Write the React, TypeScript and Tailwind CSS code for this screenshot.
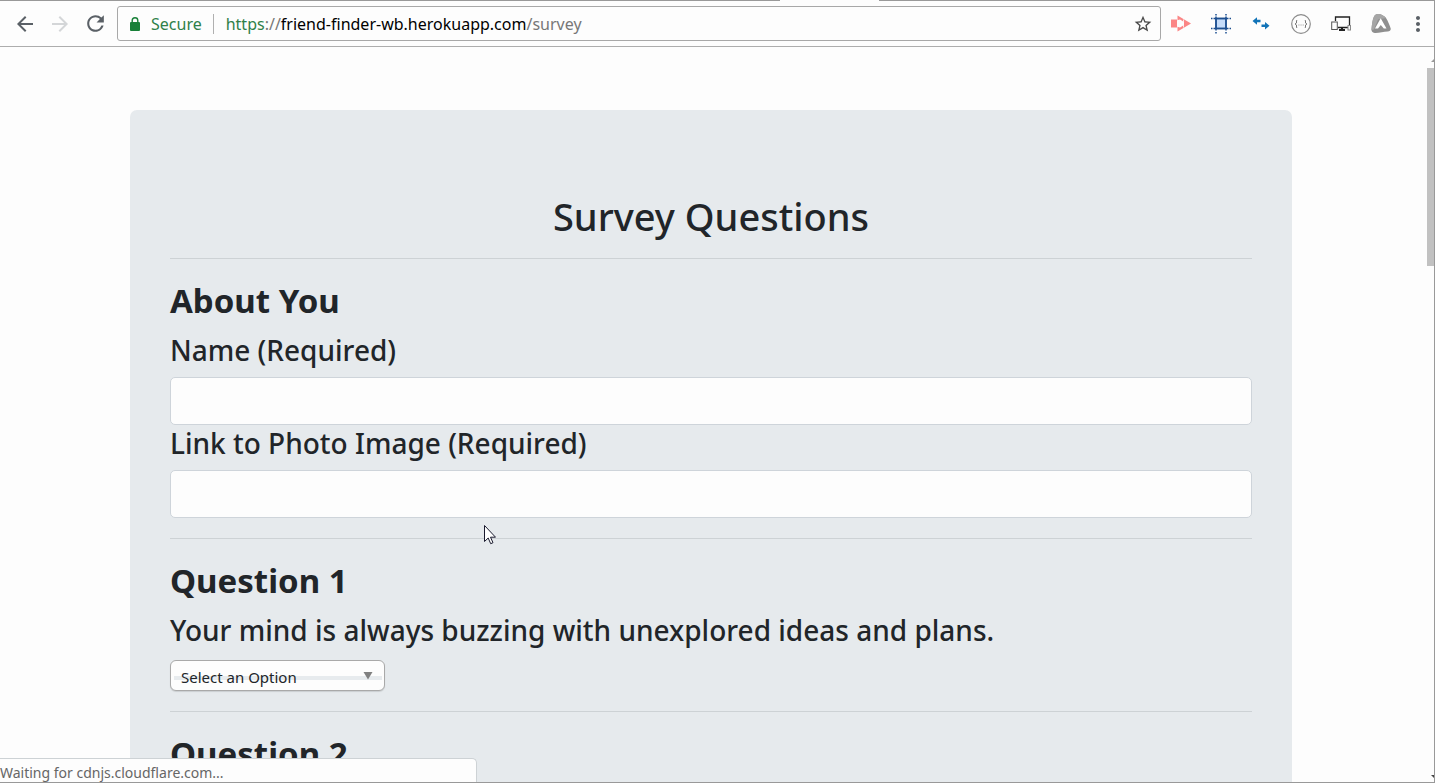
import { MdArrowBack, MdArrowForward, MdMoreVert, MdRefresh, MdStarBorder } from "react-icons/md";

const EXT_BUTTON = "flex size-5 items-center justify-center";

function Extensions() {
  return (
    <div className="flex items-center gap-5">
      <button type="button" aria-label="Screen recorder" className={EXT_BUTTON}>
        <svg viewBox="0 0 20 20" className="size-5" fill="#fb8686">
          <path d="M6.500 1.500 20 9.500 6.500 17.500Z" />
          <path d="M5.500 6.500 9 5.500 13 8v3L9 13.500 5.500 12.500Z" fill="#fdfdfd" />
          <path d="M12.500 5.500v8" stroke="#fdfdfd" strokeWidth=".8" />
          <rect x="0" y="5.500" width="6" height="8" />
        </svg>
      </button>
      <button type="button" aria-label="Artboard" className={EXT_BUTTON}>
        <svg viewBox="0 0 20 20" className="size-5" fill="none" stroke="#1d4f91" strokeWidth="1.5">
          <path d="M5 4.500h10v10H5Z" fill="#c5dcfa" />
          <path d="M2.500 4.500h15M2.500 14.500h15M5 2.500v14M15 2.500v14" />
          <path d="M0 4.500h1.500M18.500 4.500H20M0 14.500h1.500M18.500 14.500H20M5 0v1.500M15 0v1.500M5 18v1.500M15 18v1.500" />
        </svg>
      </button>
      <button type="button" aria-label="Redirect" className={EXT_BUTTON}>
        <svg viewBox="0 0 20 20" className="size-5" fill="#1274b8">
          <path d="M1.500 7 6 3.300v2.400h3.500v2.600H6v2.400Z" />
          <path d="M18.500 11.800 14 8.100v2.400h-3.500v2.600H14v2.400Z" />
        </svg>
      </button>
      <button type="button" aria-label="JSON viewer" className={EXT_BUTTON}>
        <svg viewBox="0 0 20 20" className="size-5" fill="none" stroke="#8c8c8c" strokeWidth="1.2">
          <circle cx="10" cy="10" r="9.300" />
          <path d="M6.200 6.500H5.500V9L4 10l1.500 1v2.500h.7M13.800 6.500h.7V9l1.500 1-1.500 1v2.500h-.7" stroke="#777" strokeWidth="1" />
          <path d="M7.500 11h.9M9.600 11h.9M11.700 11h.9" stroke="#888" strokeWidth="1" />
        </svg>
      </button>
      <button type="button" aria-label="Responsive viewer" className={EXT_BUTTON}>
        <svg viewBox="0 0 20 20" className="size-5" fill="none" stroke="#222" strokeWidth="1.3">
          <path d="M4.500 7V3h14v10.500H7" />
          <path d="M8 16h6M11 13.500V16" strokeWidth="2" />
          <rect x=".7" y="8" width="5.600" height="7.500" fill="#fdfdfd" stroke="#555" strokeWidth="1" />
          <rect x="17" y="11.500" width="2.500" height="4.500" fill="#fdfdfd" stroke="#888" strokeWidth="1" />
        </svg>
      </button>
      <button type="button" aria-label="Site tools" className={EXT_BUTTON}>
        <svg viewBox="0 0 20 20" className="size-5">
          <path d="M6.500 0C9-.5 13 1.500 15 4c2 3 4 8 4.700 10.500.3 2-1 2.700-3 3-4 .3-9 1.700-13 1.500C1 19 .3 17 .5 15 1 10.500 1.500 5.500 3 2.500 3.800.8 5 .3 6.500 0Z" fill="#8f8f8f" />
          <path d="M6.500 0C9-.5 13 1.500 15 4L7 5.500 3 15.500.5 16C.7 10.500 1.500 5.500 3 2.500 3.800.8 5 .3 6.500 0Z" fill="#a6a6a6" />
          <path d="M9.700 4.300 15.500 14.500h-2.700l-3-3.500L7 14.500H4Z" fill="#fff" />
        </svg>
      </button>
    </div>
  );
}

function Toolbar() {
  return (
    <header className="shrink-0 border-b border-[#adadad]">
      <div className="flex h-px">
        <div className="w-[780px] bg-[#999]" />
        <div className="w-[99px]" />
        <div className="flex-1 bg-[#999]" />
      </div>
      <div className="flex h-[45px] items-center pr-1">
        <nav className="flex w-[117px] items-center gap-[11px] pl-[13px] text-[#5a6066]">
          <button type="button" aria-label="Back"><MdArrowBack size={24} /></button>
          <button type="button" aria-label="Forward" className="text-[#d4d6d8]"><MdArrowForward size={24} /></button>
          <button type="button" aria-label="Reload"><MdRefresh size={25} /></button>
        </nav>
        <div className="flex h-[35px] flex-1 items-center rounded-[3px] border border-[#a8a8a8] pr-[7px] pl-3 text-base">
          <svg viewBox="0 0 10 14" className="h-3.5 w-2.5" fill="#188038" aria-hidden="true">
            <path d="M1 5h8a1 1 0 0 1 1 1v7a1 1 0 0 1-1 1H1a1 1 0 0 1-1-1V6a1 1 0 0 1 1-1Z" />
            <path d="M2.200 6V3.500a2.800 2.800 0 0 1 5.600 0V6" fill="none" stroke="#188038" strokeWidth="1.400" />
          </svg>
          <span className="ml-[11px] text-[#2f8049]">Secure</span>
          <span className="ml-[11px] h-5 w-px bg-[#b0b0b0]" />
          <span className="ml-3 flex-1 text-[#777]">
            <span className="text-[#2f8049]">https</span>://<span className="text-black">friend-finder-wb.herokuapp.com</span>/survey
          </span>
          <button type="button" aria-label="Bookmark this page" className="text-[#4a4a4a]"><MdStarBorder size={20} /></button>
        </div>
        <div className="flex items-center gap-[15px] pl-2.5">
          <Extensions />
          <button type="button" aria-label="Menu" className="text-[#5a6066]"><MdMoreVert size={24} /></button>
        </div>
      </div>
    </header>
  );
}

function Divider() {
  return <hr className="my-5 border-[#cdd2d5]" />;
}

function SectionTitle({ children }: { children: string }) {
  return <h2 className="mb-[11px] pt-0.5 text-[33px] leading-10 font-bold">{children}</h2>;
}

function TextField({ id, label }: { id: string; label: string }) {
  return (
    <>
      <label htmlFor={id} className="mb-[9px] block text-[28px] leading-9 font-medium">{label}</label>
      <input
        id={id}
        type="text"
        className="block h-12 w-full rounded-[5px] border border-[#ced4da] bg-[#fdfdfd] px-4 text-xl"
      />
    </>
  );
}

function Question({ number, text }: { number: number; text: string }) {
  const id = `question-${number}`;
  return (
    <section>
      <SectionTitle>{`Question ${number}`}</SectionTitle>
      <label htmlFor={id} className="mb-3 block text-[28px] leading-9 font-medium">{text}</label>
      <div className="relative w-[215px]">
        <select
          id={id}
          className="block h-[31px] w-full appearance-none rounded-md border border-[#a9a9a9] bg-[#fdfdfd] bg-[linear-gradient(#e7ebee,#e7ebee)] bg-[length:208px_4px] bg-[position:center_15px] bg-no-repeat px-2.5 pt-1 text-[15px] shadow-[0_1px_1px_rgba(0,0,0,0.12)]"
        >
          <option>Select an Option</option>
          <option>1 (Strongly Disagree)</option>
          <option>2</option>
          <option>3</option>
          <option>4</option>
          <option>5 (Strongly Agree)</option>
        </select>
        <svg viewBox="0 0 10 8" className="pointer-events-none absolute top-3 right-3 h-2 w-2.5" fill="#808080" aria-hidden="true">
          <path d="M.5 0h9L5 7.500Z" />
        </svg>
      </div>
    </section>
  );
}

export default function App() {
  return (
    <div className="relative flex h-screen flex-col overflow-hidden border-r border-b border-[#999] bg-[#fdfdfd] font-['Noto_Sans','Open_Sans',sans-serif] text-[#212529]">
      <Toolbar />
      <div className="flex min-h-0 flex-1">
        <main className="flex-1 overflow-hidden px-4 pt-[63px]">
          <form className="mx-auto max-w-[1162px] rounded-[7px] bg-[#e6eaed] px-10 py-20">
            <h1 className="pt-1 text-center text-[38px] leading-11 font-medium">Survey Questions</h1>
            <Divider />
            <SectionTitle>About You</SectionTitle>
            <TextField id="name" label="Name (Required)" />
            <TextField id="photo" label="Link to Photo Image (Required)" />
            <Divider />
            <Question number={1} text="Your mind is always buzzing with unexplored ideas and plans." />
            <Divider />
            <SectionTitle>Question 2</SectionTitle>
          </form>
        </main>
        <div className="flex w-3 flex-col items-end justify-between pt-3 pb-1" aria-hidden="true">
          <svg viewBox="0 0 3 3" className="size-[3px]" fill="#999"><path d="M3 0v3H0Z" /></svg>
          <div className="mt-[6px] h-[198px] w-[7px] bg-[#c1c1c1]" />
          <div className="flex-1" />
          <svg viewBox="0 0 3 3" className="size-[3px]" fill="#444"><path d="M0 0h3v3Z" /></svg>
        </div>
      </div>
      <div className="absolute bottom-0 left-0 h-6 w-[477px] rounded-tr-[5px] border-t border-r border-[#cdd2d5] bg-[#fdfdfd] pt-1 text-sm text-[#666]">
        Waiting for cdnjs.cloudflare.com...
      </div>
      <svg viewBox="0 0 12 20" className="pointer-events-none absolute top-[525px] left-[484px] h-5 w-3" aria-hidden="true">
        <path d="M.5.5v16l3.700-3.500 2.500 5.700 2.300-1-2.500-5.500h5Z" fill="#fff" stroke="#1a1a2e" strokeWidth="1" />
      </svg>
    </div>
  );
}
